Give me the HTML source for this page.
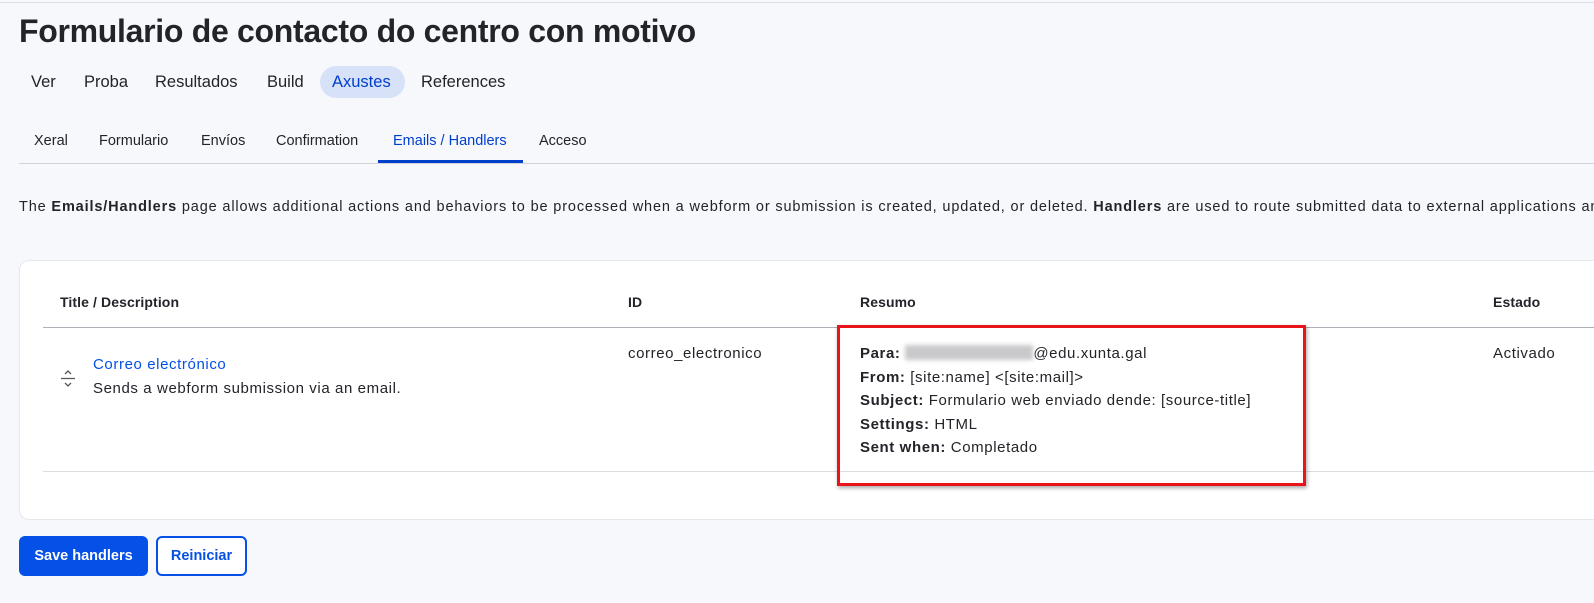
<!DOCTYPE html>
<html><head><meta charset="utf-8">
<style>
*{box-sizing:border-box;margin:0;padding:0}
html,body{width:1594px;height:603px;overflow:hidden;background:#f7f8fc;font-family:"Liberation Sans",sans-serif;color:#232429}
.topline{position:absolute;left:0;right:0;top:2px;border-top:1px solid #dcdee5}
h1{position:absolute;left:19px;top:13px;font-size:32px;font-weight:bold;letter-spacing:-0.3px;color:#232429;white-space:nowrap}
.p{position:absolute;top:66px;height:32px;line-height:32px;font-size:16.5px;white-space:nowrap}
.pill{position:absolute;left:320px;top:66px;width:85px;height:32px;border-radius:16px;background:#d7e2f8}
.sec{position:absolute;top:122px;left:19px;right:0;height:42px;border-bottom:1px solid #d3d4d9}
.s{position:absolute;top:133px;font-size:14.5px;white-space:nowrap}
.uline{position:absolute;left:378px;width:145px;top:160px;height:3px;background:#003ecc}
.desc{position:absolute;top:199px;left:19px;width:1575px;overflow:hidden;font-size:14.5px;white-space:nowrap;letter-spacing:0.85px;color:#232429}
.card{position:absolute;left:19px;top:260px;width:1575px;height:260px;background:#fff;border-radius:10px 0 0 10px;border:1px solid #e6e7ec;border-right:none}
.th{position:absolute;top:294px;font-size:14px;font-weight:bold;letter-spacing:0.1px}
.hline{position:absolute;left:43px;right:0;top:327px;border-top:1px solid #aeb0b8}
.bline{position:absolute;left:43px;right:0;top:471px;border-top:1px solid #dcdde2}
.td{position:absolute;font-size:15px;line-height:23.5px;letter-spacing:0.6px;white-space:nowrap}
a{color:#0550e6;text-decoration:none}
.red{position:absolute;left:837px;top:325px;width:469px;height:161px;border:3px solid #e8141a;box-shadow:1px 2px 4px rgba(0,0,0,.35)}
.blur{display:inline-block;width:128px;height:15px;background:#c9c9cc;filter:blur(2px);vertical-align:-2px}
.btn{position:absolute;top:536px;height:40px;border-radius:6px;font-size:14.5px;font-weight:bold;line-height:40px;text-align:center}
</style></head><body>
<div class="topline"></div>
<h1>Formulario de contacto do centro con motivo</h1>
<div class="pill"></div>
<div class="p" style="left:31px">Ver</div>
<div class="p" style="left:84px">Proba</div>
<div class="p" style="left:155px">Resultados</div>
<div class="p" style="left:267px">Build</div>
<div class="p" style="left:332px;color:#003ecc">Axustes</div>
<div class="p" style="left:421px">References</div>
<div class="sec"></div>
<div class="s" style="left:34px">Xeral</div>
<div class="s" style="left:99px">Formulario</div>
<div class="s" style="left:201px">Envíos</div>
<div class="s" style="left:276px">Confirmation</div>
<div class="s" style="left:393px;color:#003ecc">Emails / Handlers</div>
<div class="s" style="left:539px">Acceso</div>
<div class="uline"></div>
<div class="desc">The <b>Emails/Handlers</b> page allows additional actions and behaviors to be processed when a webform or submission is created, updated, or deleted. <b>Handlers</b> are used to route submitted data to external applications and send notifications and confirmations.</div>
<div class="card"></div>
<div class="th" style="left:60px">Title / Description</div>
<div class="th" style="left:628px">ID</div>
<div class="th" style="left:860px">Resumo</div>
<div class="th" style="left:1493px">Estado</div>
<div class="hline"></div>
<svg style="position:absolute;left:61px;top:370px" width="14" height="18" viewBox="0 0 14 18"><path d="M4 4l3-3 3 3M0 8.5h14M4 13l3 3 3-3" fill="none" stroke="#555" stroke-width="1.3"/></svg>
<div class="td" style="left:93px;top:353px"><a>Correo electrónico</a><br>Sends a webform submission via an email.</div>
<div class="td" style="left:628px;top:342px">correo_electronico</div>
<div class="td" style="left:860px;top:342px"><b>Para:</b> <span class="blur"></span>@edu.xunta.gal<br><b>From:</b> [site:name] &lt;[site:mail]&gt;<br><b>Subject:</b> Formulario web enviado dende: [source-title]<br><b>Settings:</b> HTML<br><b>Sent when:</b> Completado</div>
<div class="td" style="left:1493px;top:342px">Activado</div>
<div class="bline"></div>
<div class="red"></div>
<div class="btn" style="left:19px;width:129px;background:#0550e6;color:#fff">Save handlers</div>
<div class="btn" style="left:156px;width:91px;border:2px solid #0550e6;color:#0550e6;background:#fff;line-height:36px">Reiniciar</div>
</body></html>
